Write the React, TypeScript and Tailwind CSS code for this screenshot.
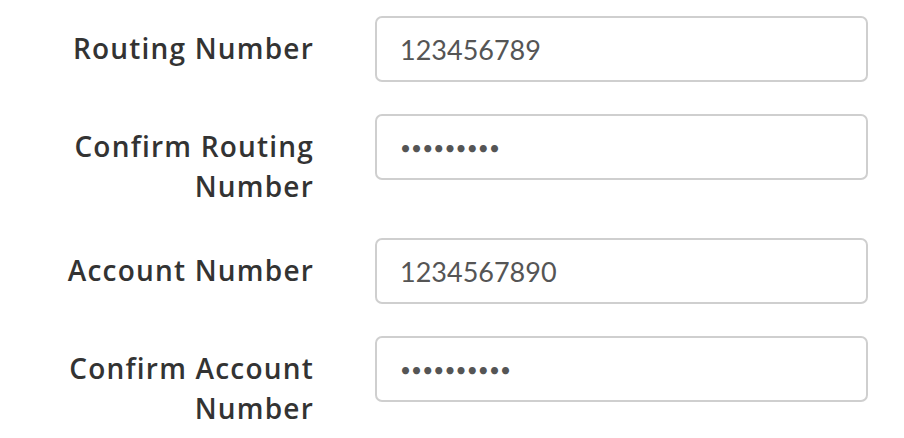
import React from "react";

type Field = { label: string; value: string; type: "text" | "password" };

const fields: Field[] = [
  { label: "Routing Number", value: "123456789", type: "text" },
  { label: "Confirm Routing Number", value: "123456789", type: "password" },
  { label: "Account Number", value: "1234567890", type: "text" },
  { label: "Confirm Account Number", value: "1234567890", type: "password" },
];

export default function App() {
  return (
    <div className="w-[904px] h-[438px] bg-white pt-[16px] overflow-hidden">
      {fields.map((f) => (
        <div key={f.label} className="flex items-start mb-[32px]">
          <label className="w-[314px] shrink-0 pl-[40px] pt-[12px] text-right text-[28px] leading-[40px] font-semibold tracking-[1.2px] text-[#333] font-['Open_Sans',sans-serif]">
            {f.label}
          </label>
          <input
            readOnly
            type={f.type}
            value={f.value}
            className={
              "ml-[61px] w-[493px] h-[66px] rounded-[7px] border-2 border-[#cfcfcf] px-[23px] text-[#555] outline-none font-['Lato',sans-serif] " +
              (f.type === "password" ? "text-[19px] tracking-[0.1px]" : "text-[27px]")
            }
          />
        </div>
      ))}
    </div>
  );
}
